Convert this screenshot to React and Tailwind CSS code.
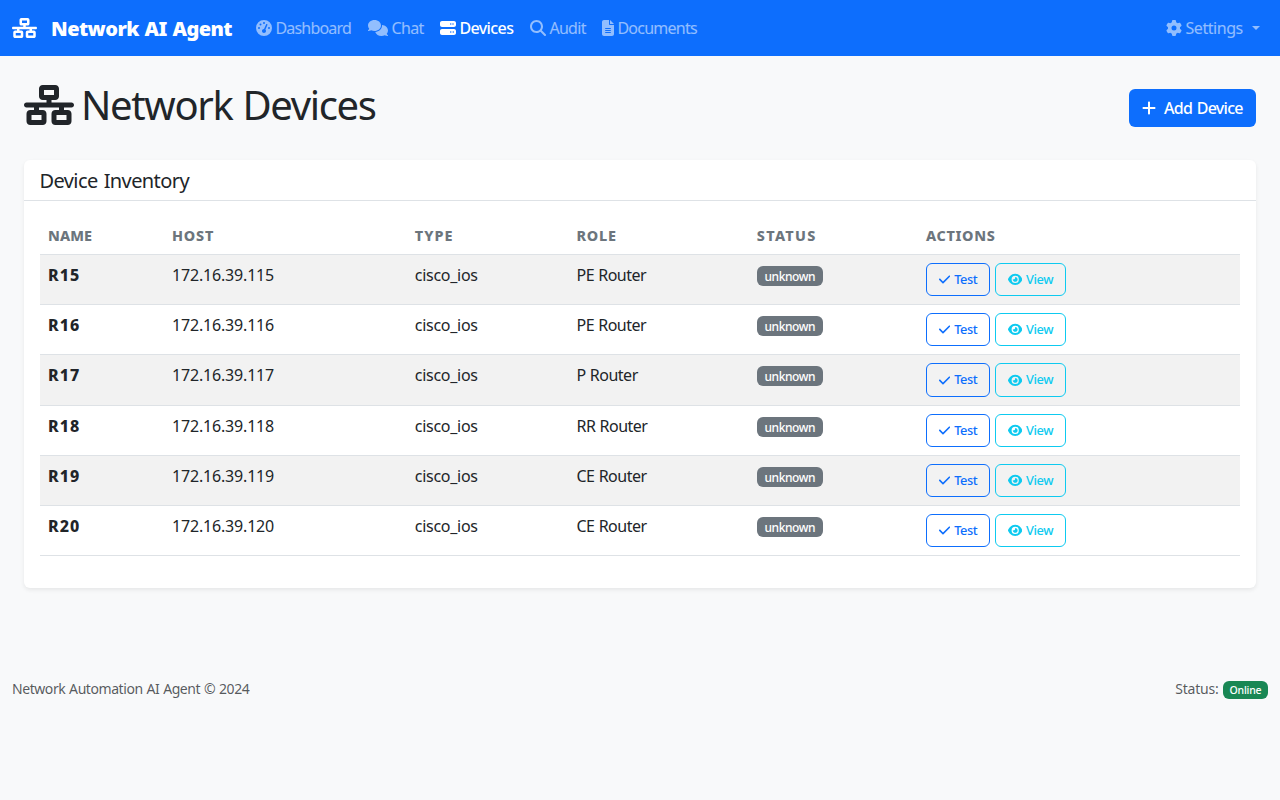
import React from 'react';
import {
  FaNetworkWired, FaGaugeHigh, FaComments, FaServer, FaMagnifyingGlass,
  FaFileLines, FaGear, FaPlus, FaCheck, FaEye,
} from 'react-icons/fa6';

const NAV = [
  { label: 'Dashboard', Icon: FaGaugeHigh, icon: 'w-4', text: 'tracking-[-0.8px]', item: 'w-[112px]' },
  { label: 'Chat', Icon: FaComments, icon: 'w-5', text: 'tracking-[-0.6px]', item: 'w-[72px]' },
  { label: 'Devices', Icon: FaServer, icon: 'w-4', text: 'font-medium tracking-[-0.6px]', item: 'w-[90px]', active: true },
  { label: 'Audit', Icon: FaMagnifyingGlass, icon: 'w-4', text: 'tracking-[-0.7px]', item: 'w-[72px]' },
  { label: 'Documents', Icon: FaFileLines, icon: 'w-3', text: 'tracking-[-0.74px]', item: 'w-[112px]' },
];

const HEADERS = [
  ['Name', 'tracking-[0.1px]'],
  ['Host', 'tracking-[0.8px]'],
  ['Type', 'tracking-[1px]'],
  ['Role', 'tracking-[0.8px]'],
  ['Status', 'tracking-[1.3px]'],
  ['Actions', 'tracking-[0.65px]'],
];

const DEVICES = [
  ['R15', '172.16.39.115', 'PE Router'],
  ['R16', '172.16.39.116', 'PE Router'],
  ['R17', '172.16.39.117', 'P Router'],
  ['R18', '172.16.39.118', 'RR Router'],
  ['R19', '172.16.39.119', 'CE Router'],
  ['R20', '172.16.39.120', 'CE Router'],
];

const COLS = 'grid grid-cols-[124px_242.8px_161.7px_180.3px_169.2px_1fr]';

function Navbar() {
  return (
    <nav className="flex h-14 items-center bg-[#0d6efd] px-3">
      <a className="flex items-center text-xl leading-[30px] font-black tracking-[-0.55px] [word-spacing:1px] text-white">
        <FaNetworkWired className="mr-[14px] h-5 w-[25px]" />
        <span className="w-[205px] pt-px whitespace-nowrap">Network AI Agent</span>
      </a>
      <div className="flex flex-1">
        {NAV.map(({ label, Icon, icon, text, item, active }) => (
          <a key={label} className={`flex items-center gap-[3.4px] ${item} ${active ? 'text-white' : 'text-white/55'}`}>
            <Icon className={`h-4 shrink-0 ${icon}`} />
            <span className={text}>{label}</span>
          </a>
        ))}
      </div>
      <a className="flex items-center text-white/55">
        <FaGear className="mr-[3.5px] h-4 w-4" />
        <span className="w-[66.5px] tracking-[-0.45px]">Settings</span>
        <span className="mr-2 border-x-[4.8px] border-t-[4.8px] border-x-transparent" />
      </a>
    </nav>
  );
}

function ActionButton({ Icon, label, className, icon }) {
  return (
    <button className={`flex h-[33.2px] items-center rounded-md border pl-3 text-[12.8px] leading-[19.2px] font-medium ${className}`}>
      <Icon className={`h-[12.8px] shrink-0 ${icon}`} />
      <span>{label}</span>
    </button>
  );
}

function DeviceTable() {
  return (
    <div>
      <div className={`${COLS} h-[38px] border-b border-[#dee2e6] text-[14.4px] leading-[21.6px] font-extrabold text-[#6c757d] uppercase`}>
        {HEADERS.map(([h, tracking]) => (
          <div key={h} className={`px-2 pt-2 ${tracking}`}>{h}</div>
        ))}
      </div>
      {DEVICES.map(([name, host, role], i) => (
        <div key={name} className={`${COLS} h-[50.2px] border-b border-[#dee2e6] ${i % 2 === 0 ? 'bg-[#f2f2f2]' : 'bg-white'}`}>
          <div className="p-2 font-extrabold tracking-[1.1px]">{name}</div>
          <div className="p-2 tracking-[-0.18px]">{host}</div>
          <div className="p-2 tracking-[-0.28px]">cisco_ios</div>
          <div className="p-2 tracking-[-0.5px] [word-spacing:0.5px]">{role}</div>
          <div className="p-2 pt-[11px]">
            <span className="flex h-5 w-[66px] items-center justify-center rounded-md bg-[#6c757d] pt-0.5 text-xs font-medium tracking-[-0.4px] text-white">unknown</span>
          </div>
          <div className="flex gap-[5px] p-2">
            <ActionButton Icon={FaCheck} label="Test" icon="mr-1 w-[11.2px]" className="w-16 border-[#0d6efd] tracking-[-0.4px] text-[#0d6efd]" />
            <ActionButton Icon={FaEye} label="View" icon="mr-[3.6px] w-[14.4px]" className="w-[71px] border-[#0dcaf0] tracking-[-0.35px] text-[#0dcaf0]" />
          </div>
        </div>
      ))}
    </div>
  );
}

export default function App() {
  return (
    <div className="min-h-screen bg-[#f8f9fa] font-['Noto_Sans',sans-serif] text-base leading-6 text-[#212529]">
      <Navbar />
      <main className="px-6 pt-6">
        <div className="flex h-[56px] items-start justify-between">
          <h1 className="flex items-center pt-[1px] text-[40px] leading-[48px] tracking-[-1.35px] [word-spacing:1px]">
            <FaNetworkWired className="mr-[7px] h-10 w-[50px]" />
            Network Devices
          </h1>
          <button className="mt-[9px] flex h-[38px] w-[127px] items-center rounded-md bg-[#0d6efd] pl-[13px] font-medium tracking-[-0.7px] [word-spacing:1px] text-white">
            <FaPlus className="mr-[8px] h-4 w-[14px]" />
            Add Device
          </button>
        </div>
        <section className="mt-6 h-[428px] rounded-md bg-white shadow-[0_2px_4px_rgba(0,0,0,0.075)]">
          <h5 className="h-[41px] border-b border-[#dee2e6] pt-[9px] pl-[15.5px] text-xl leading-6 tracking-[-0.6px] [word-spacing:1.5px]">Device Inventory</h5>
          <div className="px-4 pt-4">
            <DeviceTable />
          </div>
        </section>
      </main>
      <footer className="mt-[90px] flex justify-between px-3 text-sm leading-[21px] text-[#212529]/75">
        <span className="tracking-[-0.43px] [word-spacing:0.6px]">Network Automation AI Agent © 2024</span>
        <span className="flex items-center gap-[4.5px] tracking-[-0.2px]">
          Status:
          <span className="mt-0.5 flex h-[18px] w-[45px] items-center justify-center rounded-md bg-[#198754] pt-px text-[10.5px] font-medium text-white">Online</span>
        </span>
      </footer>
    </div>
  );
}
